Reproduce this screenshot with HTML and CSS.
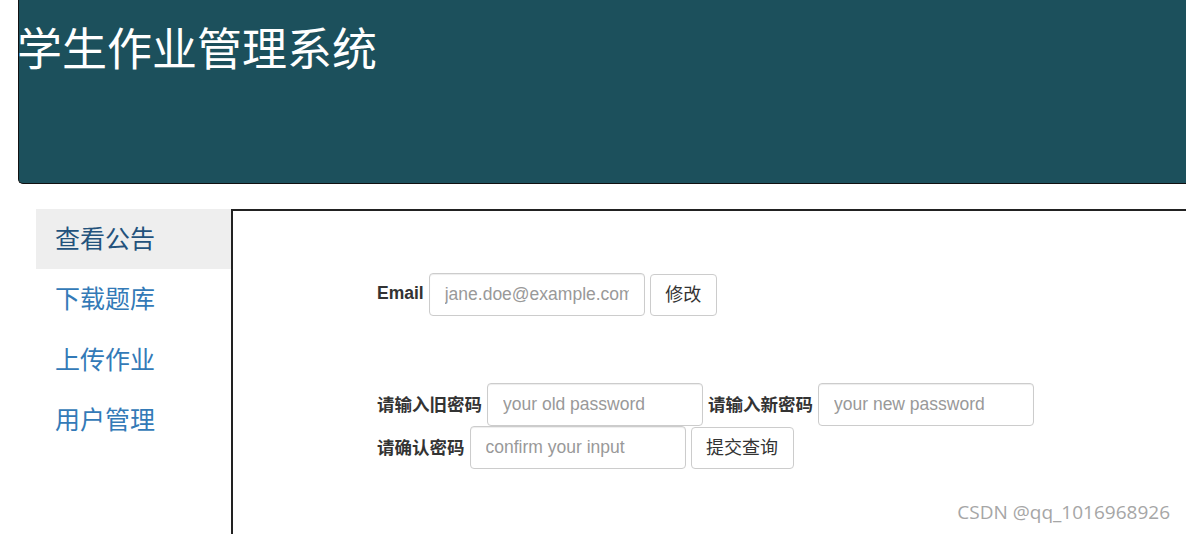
FILE: index.html
```html
<!DOCTYPE html>
<html lang="zh">
<head>
<meta charset="utf-8">
<title>学生作业管理系统</title>
<link rel="stylesheet" href="styles.css">
</head>
<body>
<div class="page">
  <header class="banner">
    <h1 class="title">学生作业管理系统</h1>
  </header>
  <div class="layout">
    <nav class="sidenav">
      <a class="nav-item active" href="#">查看公告</a>
      <a class="nav-item" href="#">下载题库</a>
      <a class="nav-item" href="#">上传作业</a>
      <a class="nav-item" href="#">用户管理</a>
    </nav>
    <main class="content">
      <form class="row row-email">
        <label class="lbl">Email</label>
        <input class="field" type="text" placeholder="jane.doe@example.com">
        <button class="btn" type="button">修改</button>
      </form>
      <form class="pw-form">
        <div class="row">
          <label class="lbl">请输入旧密码</label>
          <input class="field" type="password" placeholder="your old password">
          <label class="lbl">请输入新密码</label>
          <input class="field" type="password" placeholder="your new password">
        </div>
        <div class="row">
          <label class="lbl">请确认密码</label>
          <input class="field" type="password" placeholder="confirm your input">
          <button class="btn" type="button">提交查询</button>
        </div>
      </form>
    </main>
  </div>
  <div class="watermark">CSDN @qq_1016968926</div>
</div>
</body>
</html>
```

FILE: styles.css
```css
html, body {
  margin: 0;
  padding: 0;
  background: #fff;
  overflow: hidden;
}
body {
  font-family: "Liberation Sans", Arial, "Noto Sans CJK SC", sans-serif;
  color: #333;
}
.page {
  position: relative;
  width: 1186px;
  height: 534px;
  padding-left: 18px;
  box-sizing: border-box;
}
.banner {
  height: 184px;
  background: #1c505c;
  border: 1px solid #111;
  border-top: none;
  border-right: none;
  border-bottom-left-radius: 5px;
  box-sizing: border-box;
}
.title {
  margin: 0 0 0 -2px;
  padding-top: 22px;
  font-family: "Noto Sans CJK SC", sans-serif;
  font-weight: 400;
  font-size: 45px;
  line-height: 50px;
  color: #fff;
}
.layout {
  display: flex;
  margin-top: 25px;
  padding-left: 18px;
}
.sidenav {
  width: 195px;
  display: flex;
  flex-direction: column;
  flex-shrink: 0;
}
.nav-item {
  display: block;
  height: 60.5px;
  line-height: 56px;
  padding-bottom: 3.5px;
  box-sizing: border-box;
  padding-left: 19px;
  font-family: "Noto Sans CJK SC", sans-serif;
  font-size: 25px;
  color: #337ab7;
  text-decoration: none;
}
.nav-item.active {
  background: #eee;
  color: #23527c;
  height: 60px;
  padding-bottom: 4.5px;
}
.content {
  flex: 1;
  height: 340px;
  border-left: 2px solid #222;
  border-top: 2px solid #222;
  padding: 62px 0 0 144px;
  box-sizing: border-box;
}
.row {
  display: flex;
  align-items: center;
  gap: 5px;
}
.row-email {
  margin-bottom: 67px;
}
.lbl {
  font-weight: 700;
  font-size: 17.5px;
  color: #333;
  font-family: "Liberation Sans", Arial, "Noto Sans CJK SC", sans-serif;
  margin-top: -2px;
}
.field {
  width: 216px;
  height: 43px;
  box-sizing: border-box;
  border: 1px solid #ccc;
  border-radius: 4px;
  padding: 0 15px;
  font-family: "Liberation Sans", Arial, sans-serif;
  font-size: 17.5px;
  color: #555;
  background: #fff;
  box-shadow: inset 0 1px 1px rgba(0,0,0,0.075);
}
.field::placeholder {
  color: #999;
}
.btn {
  height: 42px;
  box-sizing: border-box;
  border: 1px solid #ccc;
  border-radius: 4px;
  background: #fff;
  padding: 0 14.5px 4px;
  font-family: "Noto Sans CJK SC", sans-serif;
  font-size: 18px;
  color: #333;
}
.watermark {
  position: absolute;
  right: 16px;
  bottom: 9px;
  font-family: "Open Sans", "Noto Sans", sans-serif;
  font-size: 19px;
  color: #a6a6a6;
}
```
